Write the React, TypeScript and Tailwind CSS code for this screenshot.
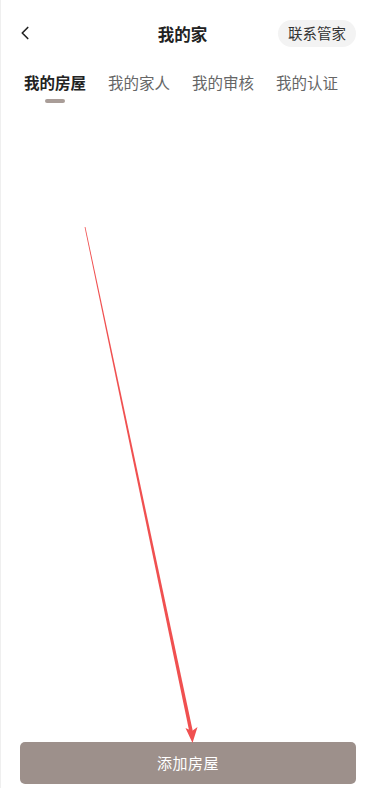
import { ChevronLeft } from 'lucide-react';

const tabs = ['我的房屋', '我的家人', '我的审核', '我的认证'];

export default function App() {
  return (
    <div
      className="relative w-[372px] h-[788px] bg-white flex flex-col overflow-hidden border-l border-[#efefef]"
      style={{ fontFamily: '"Noto Sans CJK SC", "Noto Sans", sans-serif' }}
    >
      {/* Header */}
      <div className="h-[68px] flex items-center pl-[13px] pr-[16px] relative">
        <ChevronLeft className="w-[22px] h-[22px] text-[#222] -mt-[2px]" strokeWidth={1.8} />
        <div className="absolute left-0 right-[8px] top-[22px] text-center text-[16.5px] leading-[24px] font-bold text-[#222] pointer-events-none">
          我的家
        </div>
        <div className="ml-auto h-[27px] px-[10px] rounded-full bg-[#f3f3f3] text-[14.5px] text-[#333] flex items-center -mt-[2px]">
          联系管家
        </div>
      </div>

      {/* Tabs */}
      <div className="flex pl-[23px] gap-[22px] mt-[1px]">
        {tabs.map((t, i) => (
          <div key={t} className="flex flex-col items-center">
            <span className={`text-[15.5px] leading-[26px] ${i === 0 ? 'font-bold text-[#222]' : 'text-[#666]'}`}>
              {t}
            </span>
            <span className={`mt-[4px] h-[4px] w-[20px] rounded-full ${i === 0 ? 'bg-[#a99d98]' : 'bg-transparent'}`} />
          </div>
        ))}
      </div>

      <div className="flex-1" />

      {/* Bottom button */}
      <div className="pl-[19px] pr-[16px] pb-[4px]">
        <button className="w-full h-[42px] rounded-[5px] bg-[#9d908b] text-white text-[15px] tracking-[0.5px]">
          添加房屋
        </button>
      </div>

      {/* red annotation arrow */}
      <svg className="absolute top-0 -left-[1px] pointer-events-none" width="372" height="788" viewBox="0 0 372 788">
        <polygon points="84.6,227 85.4,227 193.2,733 189.8,734" fill="#f05050" />
        <polygon points="192.5,743 185.5,728 192,731 197.5,727" fill="#f05050" />
      </svg>
    </div>
  );
}
